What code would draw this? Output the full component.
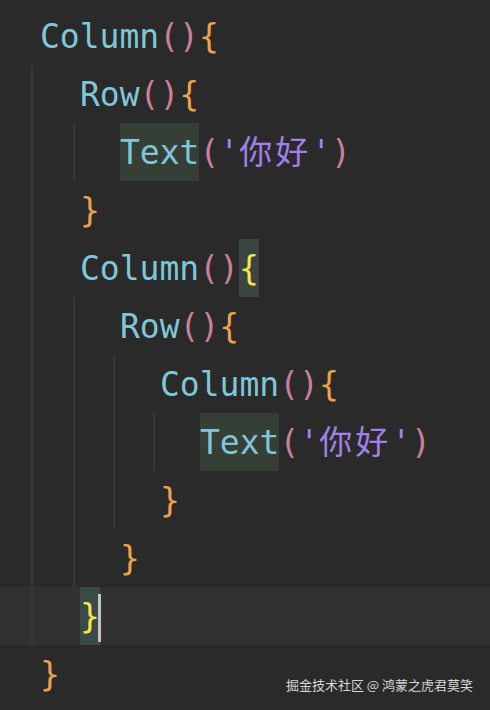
import React from 'react';

type Tok = { t: string; c: string; hl?: string };

const CYAN = 'text-[#7fc7d8]';
const PINK = 'text-[#c9809b]';
const ORANGE = 'text-[#eca24a]';
const YELLOW = 'text-[#f6e548]';
const PURPLE = 'text-[#a27fe8]';

// padding per indent level, written out so tailwind sees them
const INDENT = ['pl-[40px]', 'pl-[80px]', 'pl-[120px]', 'pl-[160px]', 'pl-[200px]'];
const GUIDE_X = ['left-[31px]', 'left-[73px]', 'left-[113px]', 'left-[153px]'];

const call = (name: string, brace: Tok): Tok[] => [
  { t: name, c: CYAN },
  { t: '()', c: PINK },
  brace,
];

const textCall: Tok[] = [
  { t: 'Text', c: CYAN, hl: 'bg-[#363f35]' },
  { t: '(', c: PINK },
  { t: "'", c: PURPLE },
  { t: '你好', c: `${PURPLE} tracking-[3px]` },
  { t: "'", c: PURPLE },
  { t: ')', c: PINK },
];

const open: Tok = { t: '{', c: ORANGE };
const close: Tok[] = [{ t: '}', c: ORANGE }];

// guides = how many indent guides are drawn on that line
const lines: { indent: number; guides: number; tokens: Tok[]; current?: boolean }[] = [
  { indent: 0, guides: 0, tokens: call('Column', open) },
  { indent: 1, guides: 1, tokens: call('Row', open) },
  { indent: 2, guides: 2, tokens: textCall },
  { indent: 1, guides: 1, tokens: close },
  { indent: 1, guides: 1, tokens: call('Column', { t: '{', c: YELLOW, hl: 'bg-[#3a4543]' }) },
  { indent: 2, guides: 2, tokens: call('Row', open) },
  { indent: 3, guides: 3, tokens: call('Column', open) },
  { indent: 4, guides: 4, tokens: textCall },
  { indent: 3, guides: 3, tokens: close },
  { indent: 2, guides: 2, tokens: close },
  { indent: 1, guides: 1, tokens: [{ t: '}', c: YELLOW, hl: 'bg-[#3a4a47]' }], current: true },
  { indent: 0, guides: 0, tokens: close },
];

export default function App() {
  return (
    <div className="relative h-[710px] w-[490px] overflow-hidden bg-[#2a2a2a] pt-[7px] font-['DejaVu_Sans_Mono','Noto_Sans_CJK_SC',monospace] text-[33px]">
      {lines.map((line, i) => (
        <div
          key={i}
          className={`relative h-[58px] whitespace-pre leading-[58px] ${INDENT[line.indent]} ${line.current ? 'bg-[#313131]' : ''}`}
        >
          {/* indent guides */}
          {GUIDE_X.slice(0, line.guides).map((x) => (
            <span key={x} className={`absolute top-0 h-full w-[2px] bg-[#383838] ${x}`} />
          ))}
          <span className="relative top-[1px]">
            {line.tokens.map((tok, j) =>
              tok.hl ? (
                <span key={j} className={`relative -top-[1px] inline-block ${tok.hl} ${tok.c}`}>
                  <span className="relative top-[1px]">{tok.t}</span>
                </span>
              ) : (
                <span key={j} className={tok.c}>
                  {tok.t}
                </span>
              )
            )}
          </span>
          {line.current && <span className="absolute left-[98px] top-[7px] h-[48px] w-[3px] bg-[#c4c4c4]" />}
        </div>
      ))}

      <div className="absolute bottom-[16px] right-[17px] font-['Noto_Sans_CJK_SC','Noto_Sans',sans-serif] text-[13px] text-[#d6d6d6]">
        掘金技术社区 @ 鸿蒙之虎君莫笑
      </div>
    </div>
  );
}
